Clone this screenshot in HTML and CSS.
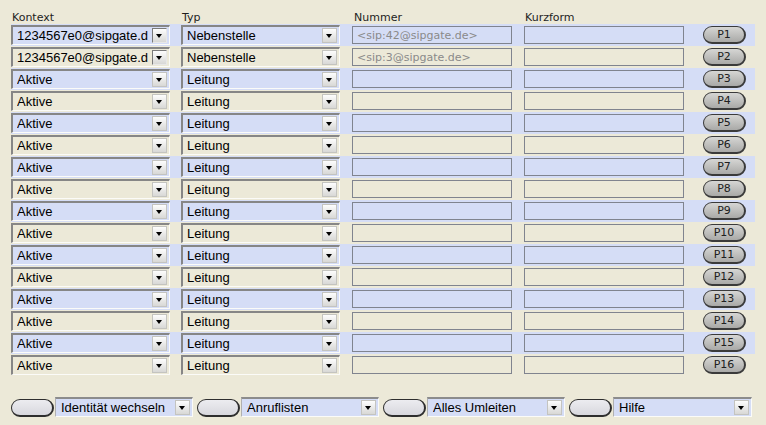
FILE: index.html
```html
<!DOCTYPE html>
<html>
<head>
<meta charset="utf-8">
<link rel="stylesheet" href="styles.css">
</head>
<body>
<div class="page">
  <div class="head">
    <span class="lbl c-k">Kontext</span>
    <span class="lbl c-t">Typ</span>
    <span class="lbl c-n">Nummer</span>
    <span class="lbl c-f">Kurzform</span>
  </div>
  <div class="rows">
    <div class="row odd"><div class="sel c-k"><span class="txt">1234567e0@sipgate.d</span><span class="arr dark"></span></div><div class="sel c-t"><span class="txt">Nebenstelle</span><span class="arr"></span></div><div class="inp c-n"><span class="ph">&lt;sip:42@sipgate.de&gt;</span></div><div class="inp c-f"></div><div class="pbtn">P1</div></div>
    <div class="row"><div class="sel c-k"><span class="txt">1234567e0@sipgate.d</span><span class="arr dark"></span></div><div class="sel c-t"><span class="txt">Nebenstelle</span><span class="arr"></span></div><div class="inp c-n"><span class="ph">&lt;sip:3@sipgate.de&gt;</span></div><div class="inp c-f"></div><div class="pbtn">P2</div></div>
    <div class="row odd"><div class="sel c-k"><span class="txt">Aktive</span><span class="arr"></span></div><div class="sel c-t"><span class="txt">Leitung</span><span class="arr"></span></div><div class="inp c-n"></div><div class="inp c-f"></div><div class="pbtn">P3</div></div>
    <div class="row"><div class="sel c-k"><span class="txt">Aktive</span><span class="arr"></span></div><div class="sel c-t"><span class="txt">Leitung</span><span class="arr"></span></div><div class="inp c-n"></div><div class="inp c-f"></div><div class="pbtn">P4</div></div>
    <div class="row odd"><div class="sel c-k"><span class="txt">Aktive</span><span class="arr"></span></div><div class="sel c-t"><span class="txt">Leitung</span><span class="arr"></span></div><div class="inp c-n"></div><div class="inp c-f"></div><div class="pbtn">P5</div></div>
    <div class="row"><div class="sel c-k"><span class="txt">Aktive</span><span class="arr"></span></div><div class="sel c-t"><span class="txt">Leitung</span><span class="arr"></span></div><div class="inp c-n"></div><div class="inp c-f"></div><div class="pbtn">P6</div></div>
    <div class="row odd"><div class="sel c-k"><span class="txt">Aktive</span><span class="arr"></span></div><div class="sel c-t"><span class="txt">Leitung</span><span class="arr"></span></div><div class="inp c-n"></div><div class="inp c-f"></div><div class="pbtn">P7</div></div>
    <div class="row"><div class="sel c-k"><span class="txt">Aktive</span><span class="arr"></span></div><div class="sel c-t"><span class="txt">Leitung</span><span class="arr"></span></div><div class="inp c-n"></div><div class="inp c-f"></div><div class="pbtn">P8</div></div>
    <div class="row odd"><div class="sel c-k"><span class="txt">Aktive</span><span class="arr"></span></div><div class="sel c-t"><span class="txt">Leitung</span><span class="arr"></span></div><div class="inp c-n"></div><div class="inp c-f"></div><div class="pbtn">P9</div></div>
    <div class="row"><div class="sel c-k"><span class="txt">Aktive</span><span class="arr"></span></div><div class="sel c-t"><span class="txt">Leitung</span><span class="arr"></span></div><div class="inp c-n"></div><div class="inp c-f"></div><div class="pbtn">P10</div></div>
    <div class="row odd"><div class="sel c-k"><span class="txt">Aktive</span><span class="arr"></span></div><div class="sel c-t"><span class="txt">Leitung</span><span class="arr"></span></div><div class="inp c-n"></div><div class="inp c-f"></div><div class="pbtn">P11</div></div>
    <div class="row"><div class="sel c-k"><span class="txt">Aktive</span><span class="arr"></span></div><div class="sel c-t"><span class="txt">Leitung</span><span class="arr"></span></div><div class="inp c-n"></div><div class="inp c-f"></div><div class="pbtn">P12</div></div>
    <div class="row odd"><div class="sel c-k"><span class="txt">Aktive</span><span class="arr"></span></div><div class="sel c-t"><span class="txt">Leitung</span><span class="arr"></span></div><div class="inp c-n"></div><div class="inp c-f"></div><div class="pbtn">P13</div></div>
    <div class="row"><div class="sel c-k"><span class="txt">Aktive</span><span class="arr"></span></div><div class="sel c-t"><span class="txt">Leitung</span><span class="arr"></span></div><div class="inp c-n"></div><div class="inp c-f"></div><div class="pbtn">P14</div></div>
    <div class="row odd"><div class="sel c-k"><span class="txt">Aktive</span><span class="arr"></span></div><div class="sel c-t"><span class="txt">Leitung</span><span class="arr"></span></div><div class="inp c-n"></div><div class="inp c-f"></div><div class="pbtn">P15</div></div>
    <div class="row"><div class="sel c-k"><span class="txt">Aktive</span><span class="arr"></span></div><div class="sel c-t"><span class="txt">Leitung</span><span class="arr"></span></div><div class="inp c-n"></div><div class="inp c-f"></div><div class="pbtn">P16</div></div>
  </div>
  <div class="bar">
    <div class="grp"><div class="gbtn"></div><div class="bsel"><span class="txt">Identität wechseln</span><span class="arr"></span></div></div>
    <div class="grp"><div class="gbtn"></div><div class="bsel"><span class="txt">Anruflisten</span><span class="arr"></span></div></div>
    <div class="grp"><div class="gbtn"></div><div class="bsel"><span class="txt">Alles Umleiten</span><span class="arr"></span></div></div>
    <div class="grp"><div class="gbtn"></div><div class="bsel wide"><span class="txt">Hilfe</span><span class="arr"></span></div></div>
  </div>
</div>
</body>
</html>
```
FILE: styles.css
```css
html, body {
  margin: 0;
  padding: 0;
  background: #ece9d8;
}
.page {
  width: 766px;
  height: 425px;
  overflow: hidden;
  font-family: "Liberation Sans", Arial, sans-serif;
}
.head {
  display: flex;
  height: 24px;
  box-sizing: border-box;
  padding-top: 12px;
  padding-left: 11px;
}
.lbl {
  font-family: "DejaVu Sans", Verdana, sans-serif;
  font-size: 11px;
  line-height: 12px;
  color: #1e1e1e;
  padding-left: 1px;
}
.head .c-t { margin-left: 11px; }
.head .c-n { margin-left: 12px; padding-left: 2px; }
.head .c-f { margin-left: 12px; }
.c-k { width: 159px; box-sizing: border-box; }
.c-t { width: 159px; box-sizing: border-box; }
.c-n { width: 160px; box-sizing: border-box; }
.c-f { width: 160px; box-sizing: border-box; }

.row {
  display: flex;
  align-items: flex-start;
  height: 22px;
  margin-left: 11px;
  width: 744px;
}
.row.odd { background: #d5ddf6; }

.sel {
  display: flex;
  align-items: center;
  height: 20px;
  margin-top: 1px;
  border-top: 2px solid #868686;
  border-left: 2px solid #868686;
  border-right: 1px solid #fbfbf8;
  border-bottom: 1px solid #fbfbf8;
  padding-left: 4px;
  padding-right: 2px;
}
.row .c-t { margin-left: 11px; }
.txt {
  flex: 1;
  min-width: 0;
  overflow: hidden;
  white-space: nowrap;
  font-size: 13px;
  line-height: 16px;
  color: #000;
}
.arr {
  flex: none;
  width: 15px;
  height: 15px;
  box-sizing: border-box;
  border: 1px solid #c4c4c0;
  background: linear-gradient(#fdfdfd, #d8d8d6) ;
  position: relative;
}
.arr.dark {
  border-color: #7a7a7a #e8e8e8 #e8e8e8 #7a7a7a;
}
.arr::after {
  content: "";
  position: absolute;
  left: 3px;
  top: 5px;
  border-left: 3.5px solid transparent;
  border-right: 3.5px solid transparent;
  border-top: 4px solid #000;
}

.inp {
  height: 18px;
  margin-top: 2px;
  border: 1px solid #80848f;
  padding-left: 4px;
  display: flex;
  align-items: center;
}
.row .c-n { margin-left: 12px; }
.row .c-f { margin-left: 12px; }
.ph {
  font-family: "DejaVu Sans", Verdana, sans-serif;
  font-size: 11px;
  color: #8a8a8a;
  white-space: nowrap;
}

.pbtn {
  margin-left: 19px;
  margin-top: 2px;
  width: 43px;
  height: 18px;
  box-sizing: border-box;
  border: 1px solid #3a3a3a;
  border-right-width: 2px;
  border-bottom-width: 2px;
  border-radius: 9px;
  background: linear-gradient(#d6d6d4, #a9a9a7);
  font-family: "DejaVu Sans", Verdana, sans-serif;
  font-size: 11px;
  line-height: 16px;
  text-align: center;
  color: #202020;
}

.bar {
  display: flex;
  margin-top: 21px;
  margin-left: 11px;
}
.grp {
  display: flex;
  align-items: flex-start;
  margin-right: 4px;
}
.gbtn {
  width: 43px;
  height: 18px;
  margin-top: 2px;
  box-sizing: border-box;
  border: 1px solid #2e2e2e;
  border-right-width: 2px;
  border-bottom-width: 2px;
  border-radius: 9px;
  background: linear-gradient(#ececf0, #d8d8de);
  margin-right: 1px;
}
.bsel {
  display: flex;
  align-items: center;
  width: 138px;
  height: 20px;
  box-sizing: border-box;
  background: #d5ddf6;
  border-top: 2px solid #8c8c8c;
  border-left: 1px solid #b0b0b0;
  border-right: 1px solid #fbfbf8;
  border-bottom: 1px solid #fbfbf8;
  padding-left: 5px;
  padding-right: 2px;
}
.bsel.wide { width: 139px; }
```
